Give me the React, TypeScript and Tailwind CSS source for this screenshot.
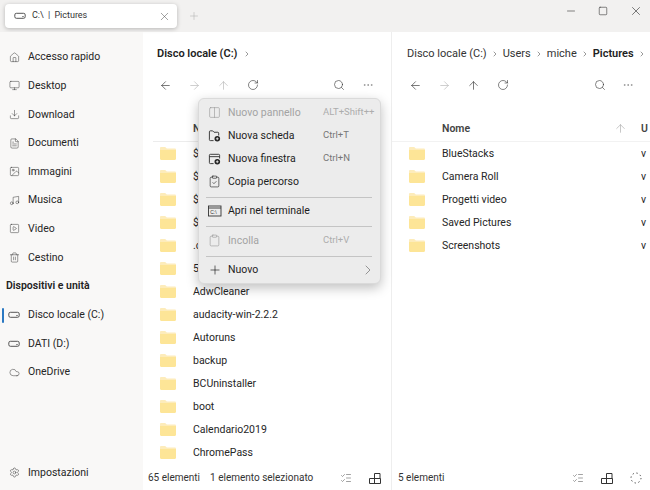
import React from "react";
import {
  ArrowLeft, ArrowRight, ArrowUp, RotateCw, Search, MoreHorizontal, X, Plus, Minus, Square,
  ChevronRight, Home, Monitor, Download, FileText, Image, Music, SquarePlay, Trash2,
  Cloud, Settings, Columns2, ClipboardCheck, Clipboard, ListChecks,
} from "lucide-react";

const Drive = ({ className = "" }: { className?: string }) => (
  <svg viewBox="0 0 12 12" width="12" height="12" className={className} fill="none" stroke="#444" strokeWidth="0.9">
    <rect x="0.8" y="3.3" width="10.4" height="5" rx="1.6" />
    <path d="M8.3 6.6h1.4" />
  </svg>
);

const Folder = () => (
  <svg viewBox="0 0 16 13" width="16" height="13" className="shrink-0">
    <path d="M0 1.2C0 .5.5 0 1.2 0h4l1.6 1.6h8C15.5 1.6 16 2 16 2.800V12H0z" fill="#fdecbb" />
    <path d="M0 3h16V11.800c0 .6-.5 1.200-1.200 1.200H1.200C.5 13 0 12.400 0 11.800z" fill="#fde597" />
  </svg>
);

const TabIcon = ({ badge = false, window: win = false }: { badge?: boolean; window?: boolean }) => (
  <svg viewBox="0 0 14 14" width="13" height="13" fill="none" stroke="#333" strokeWidth="1" className="shrink-0">
    {win ? (
      <path d="M6 12.500H2.500a1 1 0 0 1-1-1v-8a1 1 0 0 1 1-1h9a1 1 0 0 1 1 1V7M1.500 5h11" />
    ) : (
      <path d="M6 12.500H2.500a1 1 0 0 1-1-1v-8.500a1 1 0 0 1 1-1h2.500l1.500 1.500h4a1 1 0 0 1 1 1V7" />
    )}
    {badge && <circle cx="10" cy="10.500" r="3" fill="#222" stroke="none" />}
    {badge && <path d="M10 9v3M8.500 10.500h3" stroke="#fff" strokeWidth="0.8" />}
  </svg>
);

const Sep = () => <div className="h-px bg-[#c4c4c4] ml-[7px] mr-[8px]" />;

function MenuItem({ icon, label, hint, disabled, chevron }: { icon: React.ReactNode; label: string; hint?: string; disabled?: boolean; chevron?: boolean }) {
  return (
    <div className="flex items-center h-[23px] pl-[9px] pr-[8px]">
      <span className={`w-[20px] flex items-center ${disabled ? "opacity-40" : ""}`}>{icon}</span>
      <span className={`flex-1 ${disabled ? "text-[#a3a3a3]" : "text-[#1d1d1d]"}`}>{label}</span>
      {hint && <span className={`w-[49px] whitespace-nowrap text-[9.500px] ${disabled ? "text-[#adadad]" : "text-[#777]"}`}>{hint}</span>}
      {chevron && <ChevronRight size={16} strokeWidth={1} className="text-[#666] -mr-[4px]" />}
    </div>
  );
}

function Menu() {
  return (
    <div className="absolute left-[198px] top-[98px] w-[183px] h-[186px] bg-[#ececec] rounded-md border border-[#dadada] shadow-[0_4px_12px_rgba(0,0,0,0.25)] text-[10.500px] pt-[2px]">
      <MenuItem disabled icon={<Columns2 size={13} strokeWidth={1} />} label="Nuovo pannello" hint="ALT+Shift++" />
      <MenuItem icon={<TabIcon badge />} label="Nuova scheda" hint="Ctrl+T" />
      <MenuItem icon={<TabIcon badge window />} label="Nuova finestra" hint="Ctrl+N" />
      <MenuItem icon={<ClipboardCheck size={13} strokeWidth={1} />} label="Copia percorso" />
      <div className="mt-[3.500px] mb-[1.500px]"><Sep /></div>
      <MenuItem icon={
        <svg viewBox="0 0 14 12" width="14" height="12" fill="none" stroke="#333" strokeWidth="0.9">
          <rect x="0.500" y="1" width="12.500" height="10" />
          <path d="M.5 3h12.500" />
          <text x="2.200" y="9" fontSize="5" fill="#333" stroke="none" fontFamily="Liberation Sans, sans-serif">C:\</text>
        </svg>
      } label="Apri nel terminale" />
      <div className="mt-[3.500px] mb-[2.500px]"><Sep /></div>
      <MenuItem disabled icon={<Clipboard size={13} strokeWidth={1} />} label="Incolla" hint="Ctrl+V" />
      <div className="mt-[3.500px] mb-[1.500px]"><Sep /></div>
      <MenuItem icon={<Plus size={14} strokeWidth={1} />} label="Nuovo" chevron />
    </div>
  );
}

function SideItem({ icon, label, active }: { icon: React.ReactNode; label: string; active?: boolean }) {
  return (
    <div className="relative flex items-center h-[28.600px] pl-[8px] gap-[8px] text-[#262626]">
      {active && <div className="absolute left-[2px] top-[7px] h-[15px] w-[2px] rounded bg-[#2a78c2]" />}
      <span className="w-[12px] flex items-center justify-center">{icon}</span>
      <span>{label}</span>
    </div>
  );
}

function Toolbar({ right }: { right?: boolean }) {
  return (
    <div className={`flex items-center h-[18px] text-[#333] ${right ? "pl-[17px]" : "pl-[16px]"}`}>
      <ArrowLeft size={13} strokeWidth={1.2} />
      <ArrowRight size={13} strokeWidth={1.2} className="ml-[16px] text-[#b5b5b5]" />
      <ArrowUp size={13} strokeWidth={1.2} className={`ml-[16px] ${right ? "" : "text-[#b5b5b5]"}`} />
      <RotateCw size={12} strokeWidth={1.2} className="ml-[17px]" />
      <div className="flex-1" />
      <Search size={12} strokeWidth={1.2} />
      <MoreHorizontal size={12} strokeWidth={1} className={`text-[#666] ${right ? "ml-[16px] mr-[16px]" : "ml-[17px] mr-[17px]"}`} />
    </div>
  );
}

function Row({ name, date }: { name: string; date?: string }) {
  return (
    <div className="flex items-center h-[23px] pl-[17px] text-[#262626]">
      <Folder />
      <span className="ml-[17px] whitespace-nowrap flex-1">{name}</span>
      {date && <span className="w-[9px] overflow-hidden">{date}</span>}
    </div>
  );
}

function StatusIcons({ spinner }: { spinner?: boolean }) {
  return (
    <div className="flex items-center gap-[17px] text-[#444]">
      <ListChecks size={12} strokeWidth={1} />
      <svg viewBox="0 0 12 12" width="12" height="12" fill="none" stroke="#333" strokeWidth="1">
        <path d="M.5 6.500h11v5H.5zM5.500 11.500V1.500h5.500v5" />
      </svg>
      {spinner && (
        <svg viewBox="0 0 12 12" width="12" height="12" fill="none" stroke="#444" strokeWidth="1">
          <circle cx="6" cy="6" r="5" strokeDasharray="1.300 2.600" />
        </svg>
      )}
    </div>
  );
}

const Chev = () => <ChevronRight size={8} className="text-[#666] shrink-0" />;

const leftFiles = ["$", "$\u200b", "$\u200b\u200b", "$\u200b\u200b\u200b", ".c", "5", "AdwCleaner", "audacity-win-2.2.2", "Autoruns", "backup", "BCUninstaller", "boot", "Calendario2019", "ChromePass"];
const rightFiles = ["BlueStacks", "Camera Roll", "Progetti video", "Saved Pictures", "Screenshots"];

export default function App() {
  return (
    <div className="relative w-[650px] h-[490px] overflow-hidden flex flex-col bg-white text-[10.500px] font-['Roboto',sans-serif]">
      <div className="h-[32px] bg-[#f2f1f0] flex items-center pl-[5px] shrink-0">
        <div className="w-[172px] h-[24px] bg-white rounded-[4px] shadow-[0_1px_4px_rgba(0,0,0,0.25)] flex items-center pl-[9px] pr-[6px] text-[#333] text-[9px]">
          <Drive />
          <span className="ml-[6px] flex-1 [word-spacing:2px]">C:\ | Pictures</span>
          <X size={13} strokeWidth={1} className="text-[#555]" />
        </div>
        <Plus size={12} strokeWidth={1} className="ml-[11px] text-[#aaa]" />
        <div className="flex-1" />
        <div className="flex items-center gap-[21px] pr-[7px] text-[#333] self-start pt-[4px]">
          <Minus size={12} strokeWidth={1.2} />
          <Square size={10} strokeWidth={1.4} />
          <X size={14} strokeWidth={1.1} />
        </div>
      </div>
      <div className="flex-1 flex min-h-0">
        <div className="w-[143px] shrink-0 bg-[#f9f8f7] flex flex-col pt-[11px] pb-[3px]">
          <SideItem icon={<Home size={11} strokeWidth={1} />} label="Accesso rapido" />
          <SideItem icon={<Monitor size={11} strokeWidth={1} />} label="Desktop" />
          <SideItem icon={<Download size={11} strokeWidth={1} />} label="Download" />
          <SideItem icon={<FileText size={11} strokeWidth={1} />} label="Documenti" />
          <SideItem icon={<Image size={11} strokeWidth={1} />} label="Immagini" />
          <SideItem icon={<Music size={11} strokeWidth={1} />} label="Musica" />
          <SideItem icon={<SquarePlay size={11} strokeWidth={1} />} label="Video" />
          <SideItem icon={<Trash2 size={11} strokeWidth={1} />} label="Cestino" />
          <div className="h-[29px] flex items-center pl-[6px] font-semibold text-[#222]">Dispositivi e unità</div>
          <SideItem active icon={<Drive />} label="Disco locale (C:)" />
          <SideItem icon={<Drive />} label="DATI (D:)" />
          <SideItem icon={<Cloud size={11} strokeWidth={1} />} label="OneDrive" />
          <div className="flex-1" />
          <SideItem icon={<Settings size={11} strokeWidth={1} />} label="Impostazioni" />
        </div>
        <div className="w-[249px] shrink-0 flex flex-col border-r border-[#eeeeee] overflow-hidden">
          <div className="h-[44px] flex items-center pl-[14px] text-[11px] font-semibold text-[#222] gap-[6px]">
            Disco locale (C:) <Chev />
          </div>
          <Toolbar />
          <div className="mt-[22px] h-[26px] mx-[10px] border-b border-[#ececec] flex items-center pl-[40px] font-semibold text-[#444]">N</div>
          <div>
            {leftFiles.map((f) => <Row key={f} name={f} />)}
          </div>
          <div className="flex-1" />
          <div className="h-[25px] flex items-center pl-[5px] pr-[10px] text-[#333] text-[10px] gap-[10px] whitespace-nowrap">
            <span>65 elementi</span>
            <span className="flex-1">1 elemento selezionato</span>
            <StatusIcons />
          </div>
        </div>
        <div className="flex-1 min-w-0 flex flex-col overflow-hidden">
          <div className="h-[44px] flex items-center pl-[15px] text-[11px] text-[#333] gap-[4px] whitespace-nowrap">
            <span>Disco locale (C:)</span><Chev />
            <span>Users</span><Chev />
            <span>miche</span><Chev />
            <span className="font-semibold text-[#222]">Pictures</span><Chev />
          </div>
          <Toolbar right />
          <div className="mt-[22px] h-[26px] flex items-center pl-[50px] font-semibold text-[#444] border-b border-[#f2f2f2]">
            <span className="flex-1">Nome</span>
            <ArrowUp size={13} strokeWidth={1} className="text-[#999]" />
            <span className="ml-[14px] w-[9px] overflow-hidden">U</span>
          </div>
          <div>
            {rightFiles.map((f) => <Row key={f} name={f} date="v" />)}
          </div>
          <div className="flex-1" />
          <div className="h-[25px] flex items-center pl-[6px] pr-[8px] text-[#333] text-[10px]">
            <span className="flex-1">5 elementi</span>
            <StatusIcons spinner />
          </div>
        </div>
      </div>
      <Menu />
    </div>
  );
}
